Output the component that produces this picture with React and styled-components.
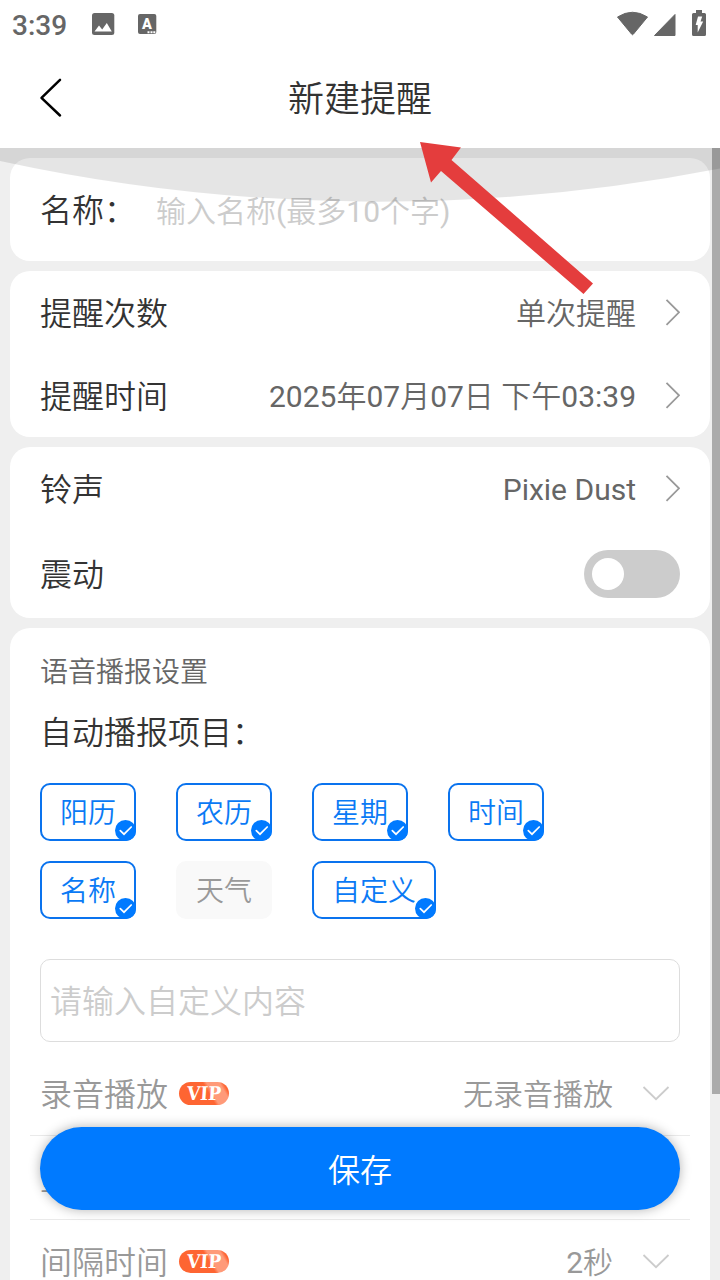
import React from "react";
import styled, { createGlobalStyle } from "styled-components";

const GlobalStyle = createGlobalStyle`
  * {
    box-sizing: border-box;
  }
  body {
    margin: 0;
    overflow: hidden;
    background: #efefef;
    font-family: Roboto, "Noto Sans CJK SC DemiLight", "Noto Sans CJK SC", sans-serif;
  }
`;

const Screen = styled.div`
  position: relative;
  display: flex;
  flex-direction: column;
  width: 720px;
  height: 1280px;
  overflow: hidden;
  background: #efefef;
`;

const StatusBar = styled.div`
  display: flex;
  flex: none;
  align-items: center;
  justify-content: space-between;
  height: 48px;
  padding: 0 13px 0 12px;
  background: #fff;
  color: #666;
  font-size: 28px;
  font-weight: 500;
  svg {
    display: block;
  }
`;

const StatusGroup = styled.div`
  display: flex;
  align-items: center;
  height: 48px;
  span {
    width: 79px;
    line-height: 48px;
    padding-top: 3px;
  }
`;

const Header = styled.div`
  display: grid;
  flex: none;
  grid-template-columns: 100px 1fr 100px;
  align-items: center;
  height: 100px;
  background: #fff;
  color: #333;
  svg {
    display: block;
    margin-left: 36px;
  }
  h1 {
    margin: 0;
    padding-top: 4px;
    font-size: 36px;
    font-weight: 400;
    line-height: 96px;
    text-align: center;
  }
`;

const Content = styled.div`
  display: flex;
  flex-direction: column;
  flex: 1;
  gap: 10px;
  padding: 10px 10px 0;
  overflow: hidden;
`;

const Card = styled.div`
  flex: none;
  padding: 0 30px;
  border-radius: 20px;
  background: #fff;
`;

const Row = styled.div`
  display: flex;
  align-items: center;
  height: ${(props) => props.$height || 83}px;
`;

const Label = styled.span`
  padding-top: 2px;
  font-size: 32px;
  line-height: 32px;
  color: ${(props) => (props.$muted ? "#999" : "#333")};
`;

const Value = styled.span`
  margin-left: auto;
  margin-right: ${(props) => (props.$muted ? 29 : 28)}px;
  padding-top: 3px;
  font-size: 30px;
  line-height: 30px;
  color: ${(props) => (props.$muted ? "#999" : "#666")};
`;

const Placeholder = styled.span`
  margin-left: 20px;
  font-size: 30px;
  line-height: 46px;
  padding-top: 4px;
  color: #ccc;
`;

const Switch = styled.div`
  display: flex;
  align-items: center;
  width: 96px;
  height: 48px;
  margin-left: auto;
  padding: 0 8px;
  border-radius: 24px;
  background: #ccc;
  &::before {
    content: "";
    width: 32px;
    height: 32px;
    border-radius: 50%;
    background: #fff;
  }
`;

const SectionTitle = styled.div`
  padding-top: 25px;
  font-size: 28px;
  line-height: 40px;
  color: #666;
`;

const SubTitle = styled.div`
  padding-top: 16px;
  font-size: 32px;
  line-height: 48px;
  color: #333;
`;

const Chips = styled.div`
  display: flex;
  flex-wrap: wrap;
  gap: 20px 40px;
  margin-top: 26px;
`;

const Chip = styled.div`
  position: relative;
  height: 58px;
  padding: 2px 18px 0;
  border: 2px solid ${(props) => (props.$on ? "#0a73ee" : "#f9f9f9")};
  border-radius: 10px;
  background: ${(props) => (props.$on ? "#fff" : "#f9f9f9")};
  color: ${(props) => (props.$on ? "#0a7af5" : "#999")};
  font-size: 28px;
  line-height: 54px;
  svg {
    position: absolute;
    right: -2px;
    bottom: -2px;
  }
`;

const TextBox = styled.div`
  height: 83px;
  margin-top: 40px;
  padding: 1px 9px 0;
  border: 1px solid #ddd;
  border-radius: 10px;
  font-size: 32px;
  line-height: 82px;
  color: #ccc;
`;

const VoiceList = styled.div`
  margin: 10px -10px 0;
`;

const VoiceRow = styled(Row)`
  height: 84px;
  padding: 0 20px 0 10px;
  border-bottom: 1px solid #eaeaea;
`;

const Vip = styled.span`
  display: flex;
  align-items: center;
  justify-content: center;
  width: 50px;
  height: 23px;
  margin-left: 11px;
  border-radius: 12px;
  background: linear-gradient(60deg, #fe6532 0 58%, #ff9a79 64% 84%, #fe6532 90%);
  color: #fff;
  b {
    font-family: "DejaVu Serif Condensed", "DejaVu Serif", serif;
    font-size: 19px;
    line-height: 23px;
    transform: skewX(-4deg);
  }
`;

const SaveButton = styled.button`
  position: absolute;
  left: 40px;
  bottom: 70px;
  width: 640px;
  height: 83px;
  padding: 0 0 2px;
  border: 0;
  border-radius: 42px;
  background: #007aff;
  box-shadow: 0 0 12px rgba(0, 0, 0, 0.3);
  color: #fff;
  font-family: inherit;
  font-size: 32px;
`;

const Scrollbar = styled.div`
  position: absolute;
  top: 148px;
  right: 0;
  width: 8px;
  height: 946px;
  background: #ababab;
`;

const Overlay = styled.svg`
  position: absolute;
  top: 0;
  left: 0;
  pointer-events: none;
`;

const ChevronRight = () => (
  <svg width="16" height="28" viewBox="0 0 16 28" fill="none" stroke="#999" strokeWidth="1.8">
    <path d="M2.500 .8 15 13.300 2.500 25.800" />
  </svg>
);

const ChevronDown = () => (
  <svg width="28" height="16" viewBox="0 0 28 16" fill="none" stroke="#ccc" strokeWidth="1.8">
    <path d="M1.500 1 14 13.200 26.500 1" />
  </svg>
);

const CheckMark = () => (
  <svg width="21" height="21" viewBox="0 0 21 21">
    <circle cx="10.5" cy="10.5" r="10.5" fill="#007aff" />
    <path d="M5.300 10.700 9 14.200 16.200 7" fill="none" stroke="#fff" strokeWidth="1.7" strokeLinecap="round" />
  </svg>
);

const StatusIcons = () => (
  <svg width="92" height="48" viewBox="615 0 92 48" fill="#666">
    <path d="M617.500 17Q632.500 7.500 647.500 17L633.500 34Q632.500 35.500 631.500 34Z" stroke="#666" strokeLinejoin="round" />
    <path d="M675 14.500V35.500H654.500Z" stroke="#666" strokeLinejoin="round" />
    <path d="M696 10h6v3h2.500a1.500 1.500 0 0 1 1.500 1.500V34.500a1.500 1.500 0 0 1-1.500 1.500h-11a1.500 1.500 0 0 1-1.500-1.500v-20a1.500 1.500 0 0 1 1.500-1.500H696z" />
    <path d="M698 16.500h4.200l-1.700 5h2.700L697.700 32.500V25h-2z" fill="#fff" />
  </svg>
);

const NotificationIcons = () => (
  <svg width="66" height="48" viewBox="91 0 66 48">
    <rect x="92" y="13" width="22.300" height="22" rx="2.500" fill="#666" />
    <path d="M94.500 31.500l4.500-6 3.200 4 4.600-6.500 5 8.500z" fill="#fff" />
    <rect x="138" y="14" width="18.300" height="20" rx="2" fill="#666" />
    <text x="147" y="28.500" fontFamily="Roboto" fontWeight="900" fontSize="14.500" textAnchor="middle" fill="#fff">A</text>
    <path d="M147.500 31.200h2v2h-2zM150.500 31.200h2v2h-2zM153.300 31.200h2v2h-2z" fill="#fff" />
  </svg>
);

const items = [
  { name: "阳历", on: true },
  { name: "农历", on: true },
  { name: "星期", on: true },
  { name: "时间", on: true },
  { name: "名称", on: true },
  { name: "天气", on: false },
  { name: "自定义", on: true },
];

const voiceRows = [
  { label: "录音播放", value: "无录音播放" },
  { label: "重复次数", value: "1次" },
  { label: "间隔时间", value: "2秒" },
];

const SettingRow = ({ label, value }) => (
  <Row>
    <Label>{label}</Label>
    <Value>{value}</Value>
    <ChevronRight />
  </Row>
);

const App = () => {
  return (
    <Screen>
      <GlobalStyle />
      <StatusBar>
        <StatusGroup>
          <span>3:39</span>
          <NotificationIcons />
        </StatusGroup>
        <StatusIcons />
      </StatusBar>
      <Header>
        <svg width="30" height="40" viewBox="0 0 30 40" fill="none" stroke="#000" strokeWidth="2.500" strokeLinecap="round" strokeLinejoin="round">
          <path d="M24 1.800 5.500 19.800 24 37.500" />
        </svg>
        <h1>新建提醒</h1>
      </Header>
      <Content>
        <Card>
          <Row $height={103}>
            <Label>名称：</Label>
            <Placeholder>输入名称(最多10个字)</Placeholder>
          </Row>
        </Card>
        <Card>
          <SettingRow label="提醒次数" value="单次提醒" />
          <SettingRow label="提醒时间" value="2025年07月07日 下午03:39" />
        </Card>
        <Card>
          <SettingRow label="铃声" value="Pixie Dust" />
          <Row $height={88}>
            <Label>震动</Label>
            <Switch />
          </Row>
        </Card>
        <Card>
          <SectionTitle>语音播报设置</SectionTitle>
          <SubTitle>自动播报项目：</SubTitle>
          <Chips>
            {items.map((item) => (
              <Chip key={item.name} $on={item.on}>
                {item.name}
                {item.on && <CheckMark />}
              </Chip>
            ))}
          </Chips>
          <TextBox>请输入自定义内容</TextBox>
          <VoiceList>
            {voiceRows.map((row) => (
              <VoiceRow key={row.label}>
                <Label $muted>{row.label}</Label>
                <Vip>
                  <b>VIP</b>
                </Vip>
                <Value $muted>{row.value}</Value>
                <ChevronDown />
              </VoiceRow>
            ))}
          </VoiceList>
        </Card>
      </Content>
      <Scrollbar />
      <SaveButton>保存</SaveButton>
      <Overlay width="720" height="300" viewBox="0 0 720 300">
        <path d="M0 148H720V168.500A1780 1780 0 0 1 0 161Z" fill="#000" fillOpacity="0.1" />
        <path d="M420 142 461 147.500 451.500 160 593 283.500 583.500 294 441 171 431 182.500Z" fill="#e43d3d" />
      </Overlay>
    </Screen>
  );
};

export default App;
